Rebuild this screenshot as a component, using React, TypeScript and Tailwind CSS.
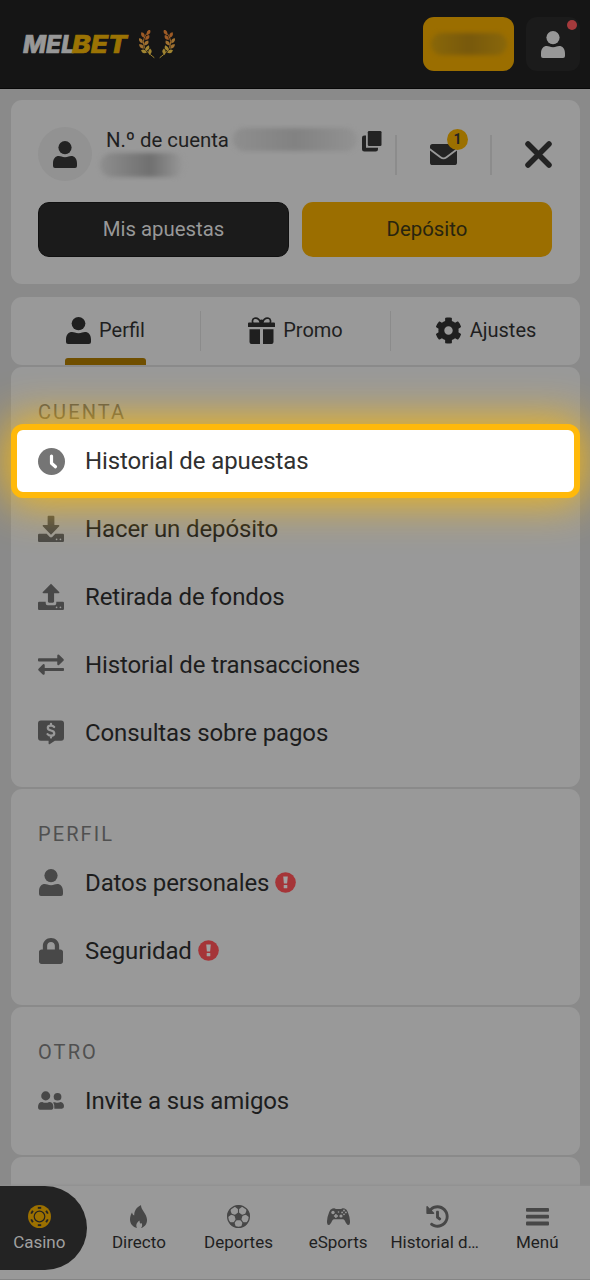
import type { ReactNode } from 'react';
import { FaHistory, FaCog, FaLock } from 'react-icons/fa';

function Person({ className }: { className: string }) {
  return (
    <svg viewBox="0 0 24 27" className={className} fill="currentColor" preserveAspectRatio="none">
      <circle cx="12" cy="6.6" r="6.6" />
      <path d="M0 22.5C0 17.5 2.500 15 5.800 15c2 0 3.200 1.200 6.200 1.200S16.200 15 18.200 15C21.500 15 24 17.500 24 22.500V25q0 2-2 2H2q-2 0-2-2Z" />
    </svg>
  );
}

const leaves: [number, number, number][] = [
  [9.3, 2.300, 118], [3.800, 5, 62], [8.200, 7.500, 128], [1.800, 10.800, 55], [7.200, 13, 132],
  [2.400, 16.500, 42], [8.300, 18.200, 118], [4.900, 21.600, 22], [10.800, 21.800, 95],
];

function LaurelHalf() {
  return (
    <g>
      <path d="M7.500 4C4.500 8 3.800 12 5 16c1.200 4 4.500 7.200 10 11.500" fill="none" stroke="url(#laurel)" strokeWidth="1" strokeLinecap="round" />
      {leaves.map(([x, y, a]) => (
        <path key={`${x}-${y}`} d="M-3.200 0Q-.5-3.800 3.200 0Q0 3 -3.200 0Z" transform={`translate(${x} ${y}) rotate(${a})`} fill={y < 9 ? '#9d5a25' : y < 17 ? '#9f7030' : '#a08431'} />
      ))}
    </g>
  );
}

function Laurel() {
  return (
    <svg viewBox="0 0 36 29" className="h-[29px] w-9">
      <defs>
        <linearGradient id="laurel" gradientUnits="userSpaceOnUse" x1="0" y1="0" x2="0" y2="28">
          <stop stopColor="#9d5724" />
          <stop offset="1" stopColor="#a38a31" />
        </linearGradient>
      </defs>
      <LaurelHalf />
      <g transform="translate(36 0) scale(-1 1)"><LaurelHalf /></g>
    </svg>
  );
}

function Logo() {
  return (
    <svg viewBox="-2 -8 112 40" className="-ml-[2px] h-10 w-[112px] overflow-visible" fontFamily="Inter, sans-serif" fontWeight="800" fontStyle="italic" fontSize="25">
      <text x="1" y="21" textLength="52" lengthAdjust="spacingAndGlyphs" fill="#989898" stroke="#989898" strokeWidth="0.700">MEL</text>
      <text x="50" y="21" textLength="55" lengthAdjust="spacingAndGlyphs" fill="#9b7304" stroke="#9b7304" strokeWidth="0.700">BET</text>
    </svg>
  );
}

const Clock = () => (
  <svg viewBox="0 0 27 27" className="size-[27px]">
    <circle cx="13.500" cy="13.500" r="13.500" fill="#757575" />
    <path d="M13.500 8v7.200l4 3.600" fill="none" stroke="#fff" strokeWidth="3.200" strokeLinecap="round" strokeLinejoin="round" />
  </svg>
);

const Tray = ({ up }: { up?: boolean }) => (
  <svg viewBox="0 0 27 28" className="h-7 w-[27px]" fill="currentColor">
    {up ? (
      <>
        <path d="M13.500.3 4.800 9q-.3 1.200 1 1.200h4.500v8.600q0 1.200 1.200 1.200h4q1.200 0 1.200-1.200v-8.600h4.500q1.300 0 1-1.200Z" />
        <path d="M1.200 19H8v1.500q0 2 2 2h7q2 0 2-2V19h6.800q1.200 0 1.200 1.200v6q0 1.300-1.200 1.300H1.200Q0 27.500 0 26.200v-6Q0 19 1.200 19Z" />
      </>
    ) : (
      <>
        <path d="M11 .3h5q1 0 1 1v8.600h4.500q1.200.2.5 1.300L13.500 20 5 11.200q-.7-1.100.5-1.300H10V1.300q0-1 1-1Z" />
        <path d="M1.200 19H9l3.200 3.200q1.300 1 2.600 0L18 19h7.800q1.200 0 1.200 1.200v6q0 1.300-1.200 1.300H1.200Q0 27.500 0 26.200v-6Q0 19 1.200 19Z" />
      </>
    )}
    <circle cx="19.300" cy="24.700" r=".9" fill="#999" />
    <circle cx="23.300" cy="24.700" r=".9" fill="#999" />
  </svg>
);

const Exchange = () => (
  <svg viewBox="0 0 27 22" className="h-[22px] w-[27px]" fill="currentColor">
    <path d="M1 4h19V1.200q.3-1.600 1.800-.9l4.600 4.500q.8.900 0 1.800l-4.600 4.400q-1.500.7-1.800-.9V7.300H1Q0 7.300 0 6.500V4.800q0-.8 1-.8Z" />
    <path d="M26 14H7v-2.800q-.3-1.600-1.800-.9L.600 14.800q-.8.900 0 1.800l4.600 4.400q1.500.7 1.800-.9v-2.800h19q1 0 1-.8v-1.700q0-.8-1-.8Z" />
  </svg>
);

const Dollar = () => (
  <svg viewBox="0 0 27 25" className="h-[25px] w-[27px]">
    <path d="M3 0h21q3 0 3 3v15q0 3-3 3h-6.500L12 24.600q-1 .5-1-.6v-3H3q-3 0-3-3V3q0-3 3-3Z" fill="currentColor" />
    <path d="M16.800 6.800q-1.200-1.400-3.300-1.400c-4.400 0-4.400 4.300 0 5 4.600.8 4.400 5.400 0 5.400q-2.400 0-3.600-1.600M13.500 3.400v2M13.500 16v1.800" fill="none" stroke="#999" strokeWidth="2.300" strokeLinecap="round" />
  </svg>
);

const Friends = () => (
  <svg viewBox="0 0 27 19" className="h-[19px] w-[27px]" fill="currentColor">
    <circle cx="8" cy="4.700" r="4.700" />
    <circle cx="20.300" cy="5.600" r="4" />
    <path d="M0 16.500q0-5.500 4.500-5.500 1.500.9 3.500.9t3.500-.9q4.500 0 4.500 5.500 0 2.500-1.800 2.500H1.800Q0 19 0 16.500Z" />
    <path d="M15.700 11.200h1.800q3 1.200 6-.2 3.500.8 3.500 4.500 0 2.500-2.200 2.500h-7.800q.4-4.300-1.300-6.800Z" />
  </svg>
);

const Gift = () => (
  <svg viewBox="0 0 27 27" className="size-[27px]">
    <path d="M12.800 5.500C11 1.500 8.500.7 6.500 1.200 4 2 4.200 5 5 6.500M14.200 5.500C16 1.500 18.500.7 20.500 1.200 23 2 22.800 5 22 6.500" fill="none" stroke="currentColor" strokeWidth="1.700" />
    <circle cx="13.500" cy="4.800" r="2.400" fill="currentColor" />
    <path fill="currentColor" d="M1 5.500h25q1 0 1 1V10H0V6.500q0-1 1-1ZM1.500 12.300H12V27H3.500q-2 0-2-2ZM15 12.300h10.500V25q0 2-2 2H15Z" />
  </svg>
);

const Copy = () => (
  <svg viewBox="0 0 20 21" className="h-[21px] w-5" fill="currentColor">
    <rect x="5.800" y="0" width="13.700" height="15" rx="1.300" />
    <path d="M4 4.500v12.200h12v1.500q0 2.300-2.300 2.300H2.300Q0 20.500 0 18.200V6.800Q0 4.500 2.300 4.500Z" />
  </svg>
);

const Mail = () => (
  <svg viewBox="0 0 27 21" className="h-[21px] w-[27px]">
    <rect width="27" height="21" rx="2.600" fill="currentColor" />
    <path d="M-.5 5 10.500 13.300q3 2.200 6 0L27.500 5" fill="none" stroke="#999" strokeWidth="1.800" />
  </svg>
);

const Alert = () => (
  <svg viewBox="0 0 21 21" className="size-[21px]">
    <circle cx="10.500" cy="10.500" r="10.300" fill="#a53538" />
    <path d="M8.200 4.600h4.600l-.7 7H8.900Z" fill="#a2a2a2" />
    <rect x="8.700" y="13" width="3.600" height="3.200" rx=".5" fill="#a2a2a2" />
  </svg>
);

const Chip = () => (
  <svg viewBox="0 0 23 23" className="size-[23px]">
    <circle cx="11.500" cy="11.500" r="11.500" fill="#9b7000" />
    <circle cx="11.500" cy="11.500" r="5.300" fill="none" stroke="#232323" strokeWidth="1.200" />
    {[0, 60, 120, 180, 240, 300].map((a) => (
      <rect key={a} x="9.800" y="1.900" width="3.400" height="1.900" fill="#232323" transform={`rotate(${a} 11.500 11.500)`} />
    ))}
  </svg>
);

const Flame = () => (
  <svg viewBox="0 0 17 23" className="h-[23px] w-[17px]">
    <path d="M11 0c-.1 5 5.800 8.200 6 14.500.2 4.500-2.500 7.500-6 8.500 1.500-1.500 1.400-3.500.5-5-1.300 1.200-1.800.2-2-2.500-2.500 1.500-4.200 4.500-2.500 7.500C3 22 0 19 0 14.500c0-3 1-5.500 2-7 .5 1.500 1 2.500 2.200 3C4.300 5.500 6.500 2.500 11 0Z" fill="#474747" />
  </svg>
);

const Ball = () => (
  <svg viewBox="0 0 23 23" className="size-[23px]">
    <circle cx="11.500" cy="11.500" r="10.900" fill="none" stroke="#474747" strokeWidth="1.200" />
    <path d="m11.500 7.200 4.200 3-1.600 5H8.900l-1.600-5Z" fill="#474747" />
    {[0, 72, 144, 216, 288].map((a) => (
      <g key={a} transform={`rotate(${a} 11.500 11.500)`}>
        <path d="M11.500 8V3.500" stroke="#474747" strokeWidth="1.100" />
        <path d="M7.200 1.200q4.300-1.900 8.600 0l-4.300 3.300Z" fill="#474747" />
      </g>
    ))}
  </svg>
);

const Controller = () => (
  <svg viewBox="0 0 23 17" className="h-[17px] w-[23px]">
    <path d="M5.500.6Q7.500-.3 8.800.9h5.400Q15.500-.3 17.500.6 20 1.300 20.800 4 23.200 10 23 14.500q-.2 3-2.300 2.400-1.500-.6-3-4.300-.6-1.300-2-1.300H7.300q-1.400 0-2 1.300-1.500 3.700-3 4.300Q.2 17.500 0 14.500-.2 10 2.200 4 3 1.300 5.500.6Z" fill="#474747" />
    <g fill="#999">
      <circle cx="6" cy="4.500" r="1.700" />
      <path d="M8.200 6h1.400v1.300H11v1.400H9.600V10H8.200V8.700H6.900V7.300h1.300Z" />
      <circle cx="14" cy="8" r="1.600" />
      <circle cx="17" cy="2.500" r=".9" /><circle cx="17" cy="6.300" r=".9" /><circle cx="15.100" cy="4.400" r=".9" /><circle cx="18.900" cy="4.400" r=".9" />
      <circle cx="11.500" cy="4" r=".8" />
    </g>
  </svg>
);

const Bars = () => (
  <svg viewBox="0 0 23 18" className="h-[18px] w-[23px]" fill="#474747">
    <rect width="23" height="3.800" rx="1" /><rect y="6.800" width="23" height="3.800" rx="1" /><rect y="13.600" width="23" height="3.800" rx="1" />
  </svg>
);

function Row({ icon, label, alert }: { icon: ReactNode; label: string; alert?: boolean }) {
  return (
    <div className="flex h-[68px] items-center pb-px pl-[27px] text-[#484848]">
      <span className="flex w-[26px] shrink-0 justify-center">{icon}</span>
      <span className="ml-[21px] text-[24px] leading-8 tracking-[-0.110px] whitespace-nowrap text-[#1d1d1d]">{label}</span>
      {alert && <span className="ml-[6px]"><Alert /></span>}
    </div>
  );
}

function Section({ title, children }: { title: string; children: ReactNode }) {
  return (
    <section className="shrink-0 rounded-[11px] bg-[#999] pb-5">
      <h2 className="h-[60px] pt-[33px] pl-[27px] text-[20px] leading-6 tracking-[2.100px] text-[#505050]">{title}</h2>
      {children}
    </section>
  );
}

function Tab({ icon, label, active }: { icon: ReactNode; label: string; active?: boolean }) {
  return (
    <div className="relative flex flex-1 items-center justify-center gap-2 pb-px text-[20px] text-[#1f1f1f]">
      {icon}
      <span className="mb-px">{label}</span>
      {active && <span className="absolute bottom-0 left-[54px] h-[7px] w-[81px] rounded-t-[3px] bg-[#704f00]" />}
    </div>
  );
}

function NavItem({ icon, label, active }: { icon: ReactNode; label: string; active?: boolean }) {
  return (
    <div className={active ? 'h-[84px] w-[97px] rounded-r-full bg-[#232323] text-[#a0a0a0]' : 'h-[84px] text-[#1f1f1f]'}>
      <div className="flex w-[99.600px] flex-col items-center pt-[19px]">
        <span className="flex h-[23px] items-center">{icon}</span>
        <span className="mt-[3px] max-w-[94px] text-[17px] leading-[22px] whitespace-nowrap">{label}</span>
      </div>
    </div>
  );
}

export default function App() {
  return (
    <div className="flex h-[1280px] w-[590px] flex-col overflow-hidden bg-[#8a8a8a] font-[Roboto,sans-serif]">
      <header className="flex h-[89px] shrink-0 items-center border-b border-[#080808] bg-[#151515] pr-[10px] pl-[22px]">
        <Logo />
        <div className="ml-[7px]"><Laurel /></div>
        <div className="ml-auto flex h-[54px] w-[91px] items-center justify-center rounded-[11px] bg-[#9b6e00]">
          <span className="h-[22px] w-[76px] rounded-full bg-linear-to-r from-[#896708] via-[#78590c] to-[#89670a] blur-[2px]" />
        </div>
        <div className="relative ml-3 flex size-[54px] items-center justify-center rounded-[11px] bg-[#1b1b1b] pr-px text-[#989898]">
          <Person className="h-[27px] w-6" />
          <span className="absolute top-[3px] right-[3px] size-[10px] rounded-full bg-[#a53a3c]" />
        </div>
      </header>

      <main className="flex h-[1097px] shrink-0 flex-col overflow-hidden pt-[11px] pr-[10px] pl-[11px]">
        <section className="h-[184px] shrink-0 rounded-[11px] bg-[#999] px-[27px] pt-[27px]">
          <div className="flex h-[54px] text-[#232323]">
            <div className="flex size-[54px] shrink-0 items-center justify-center rounded-full bg-[#929292]"><Person className="h-[27px] w-6" /></div>
            <div className="w-[257px] shrink-0 pl-[14px]">
              <div className="flex h-[25px] items-center">
                <span className="text-[20.400px] leading-6 tracking-[-0.040px] whitespace-nowrap text-[#1f1f1f]">N.º de cuenta</span>
                <span className="ml-1 h-[23px] w-[124px] shrink-0 rounded-full bg-linear-to-r from-[#8e8e8e] via-[#828282] to-[#929292] blur-[2px]" />
              </div>
              <span className="mt-px -ml-[6px] block h-[24px] w-[84px] rounded-full bg-linear-to-r from-[#8e8e8e] via-[#707070] via-60% to-[#999] blur-[2px]" />
            </div>
            <div className="mt-[4px] ml-[13px] shrink-0"><Copy /></div>
            <div className="mt-2 ml-[13px] h-10 w-[2px] shrink-0 bg-[#8c8c8c]" />
            <div className="relative mt-[17px] ml-[33px] shrink-0">
              <Mail />
              <span className="absolute -top-[15px] left-[17px] flex size-[21px] items-center justify-center rounded-full bg-[#9b7000] text-[14px] font-bold">1</span>
            </div>
            <div className="mt-2 ml-[33px] h-10 w-[2px] shrink-0 bg-[#8c8c8c]" />
            <svg viewBox="0 0 27 27" className="mt-[14px] ml-[33px] size-[27px] shrink-0"><path d="m3 3 21 21m0-21-21 21" stroke="currentColor" strokeWidth="5.500" strokeLinecap="round" /></svg>
          </div>
          <div className="mt-[21px] flex gap-[13px] text-[20.400px] tracking-[-0.010px]">
            <button className="h-[55px] w-[251px] shrink-0 rounded-[11px] border border-[#111] bg-[#1b1b1b] text-[#989898]">Mis apuestas</button>
            <button className="h-[55px] w-[250px] shrink-0 rounded-[11px] bg-[#9b6e00] text-[#28240f]">Depósito</button>
          </div>
        </section>

        <nav className="mt-[13px] flex h-[68px] shrink-0 items-center rounded-[11px] bg-[#999] *:self-stretch">
          <Tab active icon={<Person className="h-[27px] w-[25px]" />} label="Perfil" />
          <span className="my-[14px] w-px bg-[#8b8b8b]" />
          <Tab icon={<Gift />} label="Promo" />
          <span className="my-[14px] w-px bg-[#8b8b8b]" />
          <Tab icon={<FaCog className="size-[27px]" />} label="Ajustes" />
        </nav>

        <div className="mt-[2px] flex flex-col gap-[2px]">
          <Section title="CUENTA">
            <div className="relative z-10 -my-[3px] flex h-[74px] items-center rounded-[12px] border-[6px] border-[#ffb90a] bg-white pl-[21px] shadow-[0_0_44px_4px_#f5b814]">
              <Clock />
              <span className="ml-5 text-[24px] leading-8 tracking-[-0.110px] text-[#303030]">Historial de apuestas</span>
            </div>
            <Row icon={<Tray />} label="Hacer un depósito" />
            <Row icon={<Tray up />} label="Retirada de fondos" />
            <Row icon={<Exchange />} label="Historial de transacciones" />
            <Row icon={<Dollar />} label="Consultas sobre pagos" />
          </Section>
          <Section title="PERFIL">
            <Row icon={<Person className="h-[27px] w-6" />} label="Datos personales" alert />
            <Row icon={<FaLock className="h-[26px] w-6" preserveAspectRatio="none" />} label="Seguridad" alert />
          </Section>
          <Section title="OTRO">
            <Row icon={<Friends />} label="Invite a sus amigos" />
          </Section>
          <div className="h-[60px] shrink-0 rounded-t-[11px] bg-[#999]" />
        </div>
      </main>

      <footer className="relative z-20 -ml-[10.500px] grid h-[94px] w-[602px] shrink-0 grid-cols-[99.600px_99.600px_99.600px_99.600px_97px_102px] border-b border-[#858585] bg-[#999] shadow-[0_-1px_2px_#8e8e8e]">
        <NavItem active icon={<Chip />} label="Casino" />
        <NavItem icon={<Flame />} label="Directo" />
        <NavItem icon={<Ball />} label="Deportes" />
        <NavItem icon={<Controller />} label="eSports" />
        <div className="-ml-[3px]"><NavItem icon={<FaHistory className="ml-[6px] size-[23px] text-[#474747]" />} label="Historial d…" /></div>
        <div className="ml-[2.600px]"><NavItem icon={<Bars />} label="Menú" /></div>
      </footer>
    </div>
  );
}
